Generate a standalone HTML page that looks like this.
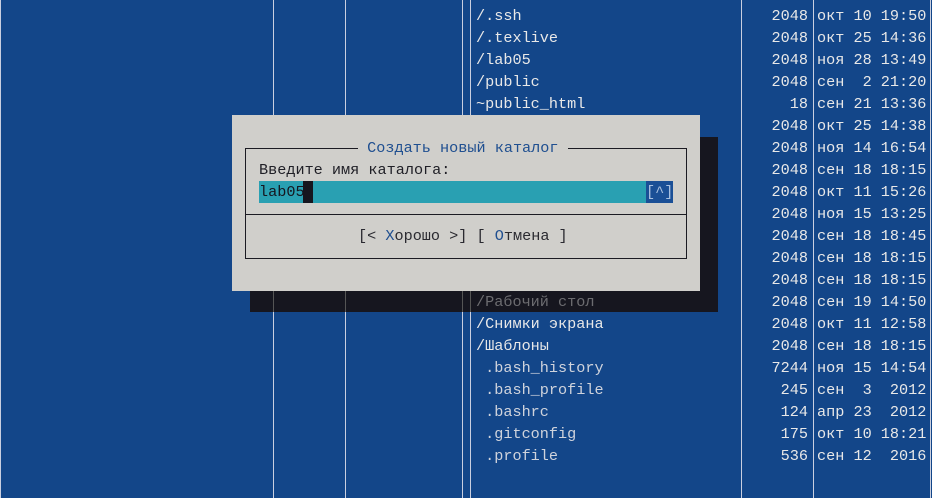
<!DOCTYPE html>
<html><head><meta charset="utf-8"><style>
body{margin:0;width:932px;height:498px;overflow:hidden;background:#134689;position:relative;font-family:"Liberation Mono","DejaVu Sans Mono",monospace;font-size:15.2px;color:#e8e8e8}
.t{position:absolute;white-space:pre;line-height:22px;height:22px}
.v{position:absolute;top:0;width:1px;height:498px;background:#c9cfe0}
.r{text-align:right}
.g{color:#cfd3dc}
</style></head><body>
<div class="v" style="left:0"></div>
<div class="v" style="left:273px"></div>
<div class="v" style="left:345px"></div>
<div class="v" style="left:462px"></div>
<div class="v" style="left:470px"></div>
<div class="v" style="left:741px"></div>
<div class="v" style="left:813px"></div>
<div class="v" style="left:930px"></div>

<div class="t" style="left:476px;top:5px">/.ssh</div>
<div class="t" style="left:476px;top:27px">/.texlive</div>
<div class="t" style="left:476px;top:49px">/lab05</div>
<div class="t" style="left:476px;top:71px">/public</div>
<div class="t" style="left:476px;top:93px">~public_html</div>
<div class="t" style="left:476px;top:313px">/Снимки экрана</div>
<div class="t" style="left:476px;top:335px">/Шаблоны</div>
<div class="t g" style="left:476px;top:357px"> .bash_history</div>
<div class="t g" style="left:476px;top:379px"> .bash_profile</div>
<div class="t g" style="left:476px;top:401px"> .bashrc</div>
<div class="t g" style="left:476px;top:423px"> .gitconfig</div>
<div class="t g" style="left:476px;top:445px"> .profile</div>

<div class="t r" style="left:740px;width:68px;top:5px;line-height:22px">2048<br>2048<br>2048<br>2048<br>18<br>2048<br>2048<br>2048<br>2048<br>2048<br>2048<br>2048<br>2048<br>2048<br>2048<br>2048<br>7244<br>245<br>124<br>175<br>536</div>
<div class="t" style="left:817px;top:5px;height:auto">окт 10 19:50
окт 25 14:36
ноя 28 13:49
сен  2 21:20
сен 21 13:36
окт 25 14:38
ноя 14 16:54
сен 18 18:15
окт 11 15:26
ноя 15 13:25
сен 18 18:45
сен 18 18:15
сен 18 18:15
сен 19 14:50
окт 11 12:58
сен 18 18:15
ноя 15 14:54
сен  3  2012
апр 23  2012
окт 10 18:21
сен 12  2016</div>

<div style="position:absolute;left:250px;top:137px;width:468px;height:175px;background:#16161f"></div>
<div style="position:absolute;left:273px;top:291px;width:1px;height:21px;background:#555"></div>
<div style="position:absolute;left:345px;top:291px;width:1px;height:21px;background:#555"></div>
<div style="position:absolute;left:462px;top:291px;width:1px;height:21px;background:#555"></div>
<div style="position:absolute;left:470px;top:291px;width:1px;height:21px;background:#555"></div>
<div class="t" style="left:476px;top:291px;color:#6c6c70">/Рабочий стол</div>

<div style="position:absolute;left:232px;top:115px;width:468px;height:176px;background:#d0cfcb"></div>
<div style="position:absolute;left:245px;top:148px;width:440px;height:109px;border:1px solid #1b1b22"></div>
<div style="position:absolute;left:246px;top:214px;width:440px;height:1px;background:#1b1b22"></div>
<div class="t" style="left:358px;top:137px;background:#d0cfcb;color:#1f4f90"> Создать новый каталог </div>
<div class="t" style="left:259px;top:159px;color:#1f1f26">Введите имя каталога:</div>
<div style="position:absolute;left:259px;top:181px;width:414px;height:22px;background:#29a0b2"></div>
<div style="position:absolute;left:646px;top:181px;width:27px;height:22px;background:#1a4f96"></div>
<div style="position:absolute;left:303px;top:181px;width:10px;height:22px;background:#16161f"></div>
<div class="t" style="left:259px;top:181px;color:#16161f">lab05</div>
<div class="t" style="left:646px;top:181px;color:#a9c1e0">[^]</div>
<div class="t" style="left:358px;top:225px;color:#2a2a30">[&lt; <span style="color:#1f4f90">Х</span>орошо &gt;] [ <span style="color:#1f4f90">О</span>тмена ]</div>
</body></html>
